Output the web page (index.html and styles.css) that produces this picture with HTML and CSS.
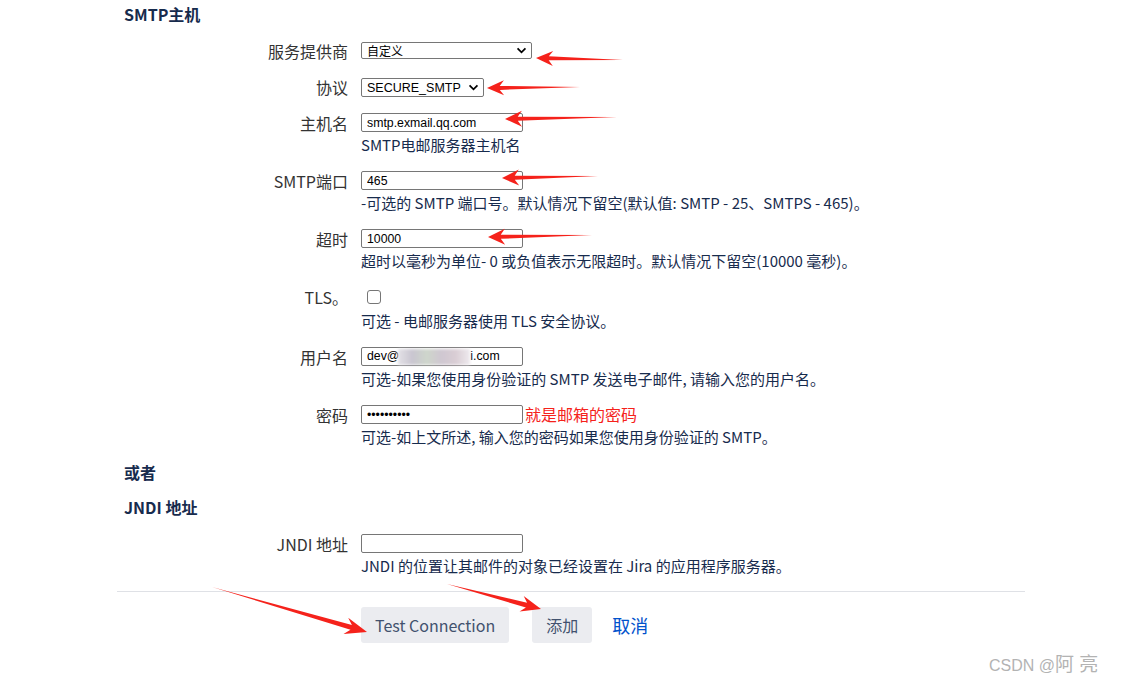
FILE: index.html
```html
<!DOCTYPE html>
<html lang="zh-CN">
<head>
    <meta charset="UTF-8">
    <title>SMTP 邮件服务器</title>
    <link rel="stylesheet" href="styles.css">
</head>
<body>
    <div class="page">
        <h3 class="section-title first">SMTP主机</h3>

        <div class="row">
            <label class="row-label">服务提供商</label>
            <div class="row-field">
                <div class="select wide">
                    <span>自定义</span>
                    <svg class="chevron" viewBox="0 0 12 8"><path d="M1.5 1.5 L6 6 L10.5 1.5" /></svg>
                </div>
            </div>
        </div>

        <div class="row">
            <label class="row-label">协议</label>
            <div class="row-field">
                <div class="select narrow">
                    <span>SECURE_SMTP</span>
                    <svg class="chevron" viewBox="0 0 12 8"><path d="M1.5 1.5 L6 6 L10.5 1.5" /></svg>
                </div>
            </div>
        </div>

        <div class="row">
            <label class="row-label">主机名</label>
            <div class="row-field">
                <input class="text" type="text" value="smtp.exmail.qq.com">
                <div class="desc">SMTP电邮服务器主机名</div>
            </div>
        </div>

        <div class="row">
            <label class="row-label">SMTP端口</label>
            <div class="row-field">
                <input class="text" type="text" value="465">
                <div class="desc">-可选的 SMTP 端口号。默认情况下留空(默认值: SMTP - 25、SMTPS - 465)。</div>
            </div>
        </div>

        <div class="row">
            <label class="row-label">超时</label>
            <div class="row-field">
                <input class="text" type="text" value="10000">
                <div class="desc">超时以毫秒为单位- 0 或负值表示无限超时。默认情况下留空(10000 毫秒)。</div>
            </div>
        </div>

        <div class="row">
            <label class="row-label">TLS。</label>
            <div class="row-field">
                <span class="checkbox"></span>
                <div class="desc">可选 - 电邮服务器使用 TLS 安全协议。</div>
            </div>
        </div>

        <div class="row">
            <label class="row-label">用户名</label>
            <div class="row-field">
                <div class="text masked">dev@<span class="blur"></span>i.com</div>
                <div class="desc">可选-如果您使用身份验证的 SMTP 发送电子邮件, 请输入您的用户名。</div>
            </div>
        </div>

        <div class="row">
            <label class="row-label">密码</label>
            <div class="row-field">
                <div class="inline">
                    <input class="text" type="password" value="1234567890">
                    <span class="note">就是邮箱的密码</span>
                </div>
                <div class="desc">可选-如上文所述, 输入您的密码如果您使用身份验证的 SMTP。</div>
            </div>
        </div>

        <h3 class="section-title">或者</h3>
        <h3 class="section-title">JNDI 地址</h3>

        <div class="row">
            <label class="row-label">JNDI 地址</label>
            <div class="row-field">
                <input class="text" type="text" value="">
                <div class="desc">JNDI 的位置让其邮件的对象已经设置在 Jira 的应用程序服务器。</div>
            </div>
        </div>

        <div class="buttons">
            <button class="btn">Test Connection</button>
            <button class="btn">添加</button>
            <a class="cancel" href="#">取消</a>
        </div>
    </div>

    <!-- red annotation arrows drawn over the form -->
    <svg id="arrows" xmlns="http://www.w3.org/2000/svg"></svg>

    <div class="watermark">CSDN @<span class="wm-name">阿 亮</span></div>

    <script>
        // tail x, tail y, tip x, tip y, head length, head width, shaft width
        const arrows = [
            [623, 60, 536, 58, 17, 15, 4],
            [580, 87, 487, 88, 17, 15, 4],
            [617, 117, 505, 119, 17, 16, 4],
            [598, 176, 502, 178, 17, 16, 4],
            [592, 235, 488, 237, 17, 16, 4],
            [212, 587, 367, 632, 22, 17, 5],
            [447, 584, 541, 609, 20, 16, 5]
        ];

        function arrowPoints(tx, ty, hx, hy, hl, hw, sw) {
            const len = Math.hypot(hx - tx, hy - ty);
            const ux = (hx - tx) / len, uy = (hy - ty) / len;
            const nx = -uy, ny = ux;
            const bx = hx - ux * hl * 0.75, by = hy - uy * hl * 0.75;
            const wx = hx - ux * hl, wy = hy - uy * hl;
            const pts = [
                [tx, ty],
                [bx + nx * sw / 2, by + ny * sw / 2],
                [wx + nx * hw / 2, wy + ny * hw / 2],
                [hx, hy],
                [wx - nx * hw / 2, wy - ny * hw / 2],
                [bx - nx * sw / 2, by - ny * sw / 2]
            ];
            return pts.map(p => p[0].toFixed(1) + "," + p[1].toFixed(1)).join(" ");
        }

        const svg = document.getElementById("arrows");
        arrows.forEach((a) => {
            const poly = document.createElementNS("http://www.w3.org/2000/svg", "polygon");
            poly.setAttribute("points", arrowPoints(...a));
            poly.setAttribute("fill", "#f5221b");
            svg.appendChild(poly);
        });
    </script>
</body>
</html>
```

FILE: styles.css
```css
body {
    margin: 0;
    background: #fff;
    font-family: "Noto Sans CJK SC", "Noto Sans", sans-serif;
    color: #172b4d;
}

.page {
    width: 908px;
    margin-left: 117px;
    padding-top: 4px;
}

/* Section headings */
.section-title {
    margin: 15px 0 0;
    padding-left: 7px;
    font-size: 16px;
    line-height: 20px;
    font-weight: bold;
    color: #172b4d;
}

.section-title.first {
    margin-top: 0;
}

/* Label / field rows */
.row {
    display: grid;
    grid-template-columns: 231px 1fr;
    column-gap: 13px;
    margin-top: 16px;
}

.section-title + .row {
    margin-top: 17px;
}

.row-label {
    text-align: right;
    font-size: 16px;
    line-height: 20px;
    color: #333;
}

.row-field {
    display: flex;
    flex-direction: column;
    align-items: flex-start;
}

.desc {
    margin-top: 2px;
    font-size: 15px;
    line-height: 21px;
    color: #172b4d;
}

/* Inputs */
.text {
    box-sizing: border-box;
    width: 162px;
    height: 19px;
    margin: 0;
    padding: 0 5px;
    border: 1px solid #767676;
    border-radius: 2px;
    font-family: "Liberation Sans", Arial, sans-serif;
    font-size: 12.3px;
    color: #000;
    background: #fff;
    outline: none;
}

.masked {
    display: flex;
    align-items: center;
    line-height: 17px;
}

.blur {
    display: inline-block;
    width: 72px;
    height: 16px;
    margin-left: -1px;
    background: linear-gradient(90deg, #e3e1e6, #c9c5d0 20%, #ced6cb 40%, #cfc7d1 60%, #d9cdd4 80%, #eeeaee);
    filter: blur(1.5px);
}

.inline {
    display: flex;
    align-items: center;
}

.note {
    margin-left: 2px;
    font-size: 16px;
    line-height: 19px;
    color: #f5221b;
}

/* Selects */
.select {
    box-sizing: border-box;
    display: flex;
    align-items: center;
    justify-content: space-between;
    margin-top: 1px;
    padding: 0 4px 0 5px;
    border: 1px solid #767676;
    border-radius: 2px;
    font-family: "Liberation Sans", Arial, sans-serif;
    font-size: 12px;
    color: #000;
}

.select.wide {
    width: 171px;
    height: 17px;
}

.select.narrow {
    width: 123px;
    height: 19px;
    font-size: 12.5px;
}

.chevron {
    width: 11px;
    height: 7px;
    fill: none;
    stroke: #000;
    stroke-width: 2;
}

/* Checkbox */
.checkbox {
    box-sizing: border-box;
    width: 14px;
    height: 14px;
    margin: 3px 0 0 6px;
    border: 1px solid #767676;
    border-radius: 3px;
    background: #fff;
}

.checkbox + .desc {
    margin-top: 6px;
}

/* Footer buttons */
.buttons {
    display: flex;
    align-items: center;
    margin-top: 15px;
    padding: 15px 0 0 244px;
    border-top: 1px solid #dfe1e6;
}

.btn {
    height: 36px;
    margin-right: 23px;
    padding: 0 14px;
    border: none;
    border-radius: 3px;
    background: #ebecf0;
    color: #42526e;
    font-family: "Noto Sans CJK SC", "Noto Sans", sans-serif;
    font-size: 16px;
}

.cancel {
    margin-left: -3px;
    font-size: 18px;
    color: #0052cc;
    text-decoration: none;
}

/* Overlays */
#arrows {
    position: absolute;
    top: 0;
    left: 0;
    width: 1122px;
    height: 683px;
    pointer-events: none;
}

.watermark {
    position: absolute;
    left: 989px;
    top: 652px;
    font-family: "Liberation Sans", "Noto Sans CJK SC", sans-serif;
    font-size: 16px;
    line-height: 22px;
    color: #b3b3b3;
}

.wm-name {
    font-family: "Noto Sans CJK SC", sans-serif;
    font-size: 19px;
    word-spacing: 1px;
}
```
